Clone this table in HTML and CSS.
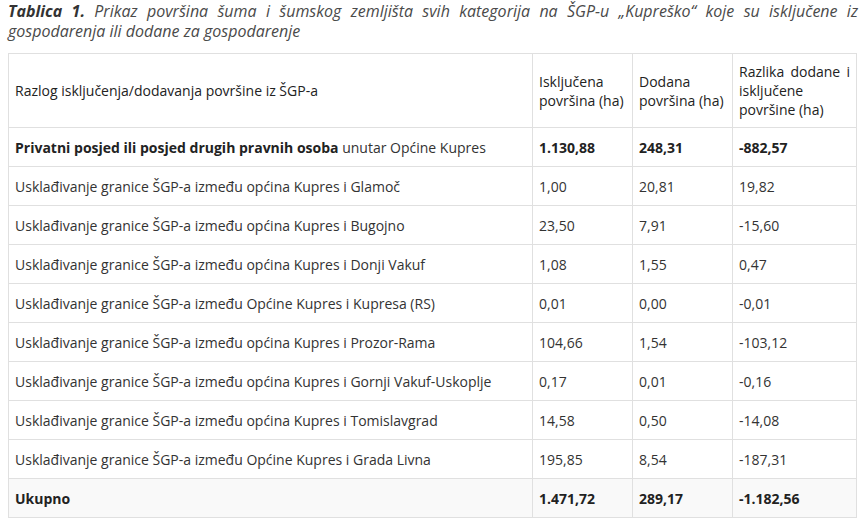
FILE: index.html
```html
<!DOCTYPE html>
<html lang="hr">
<head>
<meta charset="utf-8">
<title>Tablica 1</title>
<link rel="stylesheet" href="styles.css">
</head>
<body>
<p class="caption"><b>Tablica 1.</b> Prikaz površina šuma i šumskog zemljišta svih kategorija na ŠGP-u „Kupreško“ koje su isključene iz gospodarenja ili dodane za gospodarenje</p>
<table class="data">
<colgroup>
<col class="c1"><col class="c2"><col class="c3"><col class="c4">
</colgroup>
<thead>
<tr>
<th>Razlog isključenja/dodavanja površine iz ŠGP-a</th>
<th>Isključena površina (ha)</th>
<th>Dodana površina (ha)</th>
<th>Razlika dodane i isključene površine (ha)</th>
</tr>
</thead>
<tbody>
<tr><td><b>Privatni posjed ili posjed drugih pravnih osoba</b> unutar Općine Kupres</td><td><b>1.130,88</b></td><td><b>248,31</b></td><td><b>-882,57</b></td></tr>
<tr><td>Usklađivanje granice ŠGP-a između općina Kupres i Glamoč</td><td>1,00</td><td>20,81</td><td>19,82</td></tr>
<tr><td>Usklađivanje granice ŠGP-a između općina Kupres i Bugojno</td><td>23,50</td><td>7,91</td><td>-15,60</td></tr>
<tr><td>Usklađivanje granice ŠGP-a između općina Kupres i Donji Vakuf</td><td>1,08</td><td>1,55</td><td>0,47</td></tr>
<tr><td>Usklađivanje granice ŠGP-a između Općine Kupres i Kupresa (RS)</td><td>0,01</td><td>0,00</td><td>-0,01</td></tr>
<tr><td>Usklađivanje granice ŠGP-a između općina Kupres i Prozor-Rama</td><td>104,66</td><td>1,54</td><td>-103,12</td></tr>
<tr><td>Usklađivanje granice ŠGP-a između općina Kupres i Gornji Vakuf-Uskoplje</td><td>0,17</td><td>0,01</td><td>-0,16</td></tr>
<tr><td>Usklađivanje granice ŠGP-a između općina Kupres i Tomislavgrad</td><td>14,58</td><td>0,50</td><td>-14,08</td></tr>
<tr><td>Usklađivanje granice ŠGP-a između Općine Kupres i Grada Livna</td><td>195,85</td><td>8,54</td><td>-187,31</td></tr>
<tr class="total"><td>Ukupno</td><td>1.471,72</td><td>289,17</td><td>-1.182,56</td></tr>
</tbody>
</table>
</body>
</html>
```
FILE: styles.css
```css
body {
  margin: 0;
  padding: 0 4px 0 8px;
  font-family: "Open Sans", "Liberation Sans", sans-serif;
  color: #333;
  background: #fff;
}
.caption {
  margin: 0 0 12px 0;
  padding-top: 1px;
  font-style: italic;
  font-size: 16px;
  line-height: 20px;
  text-align: justify;
  color: #4a4a4a;
}
.caption b {
  color: #333;
}
.data {
  width: 848px;
  border-collapse: collapse;
  table-layout: fixed;
  font-size: 14px;
  line-height: 19px;
}
.c1 { width: 524px; }
.c2 { width: 100px; }
.c3 { width: 100px; }
.c4 { width: 124px; }
.data th,
.data td {
  border: 1px solid #e0e0e0;
  padding: 0 6px;
  vertical-align: middle;
  text-align: left;
}
.data th {
  height: 73px;
  font-weight: 500;
  color: #222;
  text-align: justify;
}
.data td {
  height: 38px;
}
.data td b {
  font-weight: 700;
  color: #222;
}
.total td {
  background: #f9f9f9;
  font-weight: 700;
  color: #222;
}
```
